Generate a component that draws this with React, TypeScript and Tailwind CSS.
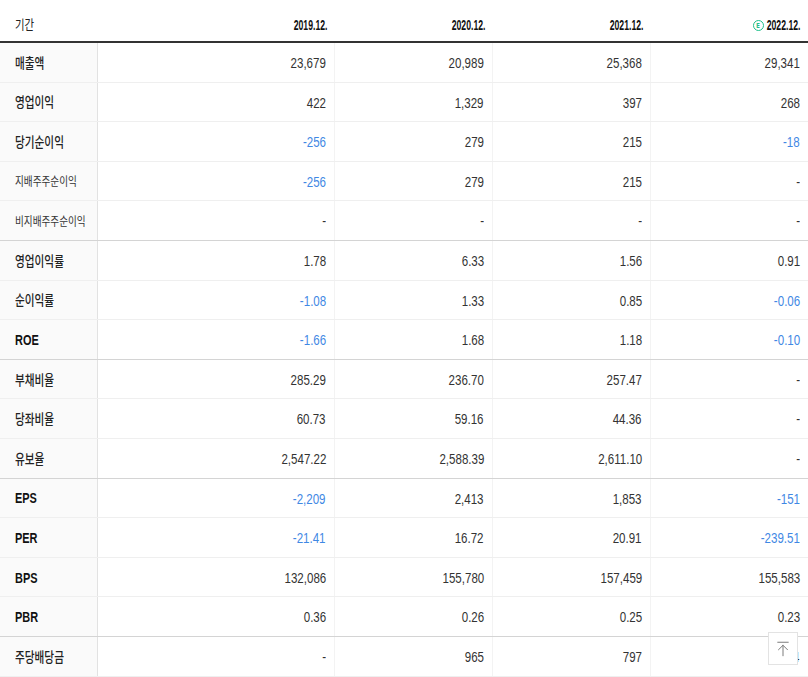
import { ArrowUpToLine } from "lucide-react";

type Row = { label: string; values: string[]; small?: boolean; latin?: boolean; groupEnd?: boolean };

const periods = ["2019.12.", "2020.12.", "2021.12.", "2022.12."];

const rows: Row[] = [
  { label: "매출액", values: ["23,679", "20,989", "25,368", "29,341"] },
  { label: "영업이익", values: ["422", "1,329", "397", "268"] },
  { label: "당기순이익", values: ["-256", "279", "215", "-18"] },
  { label: "지배주주순이익", values: ["-256", "279", "215", "-"], small: true },
  { label: "비지배주주순이익", values: ["-", "-", "-", "-"], small: true, groupEnd: true },
  { label: "영업이익률", values: ["1.78", "6.33", "1.56", "0.91"] },
  { label: "순이익률", values: ["-1.08", "1.33", "0.85", "-0.06"] },
  { label: "ROE", values: ["-1.66", "1.68", "1.18", "-0.10"], latin: true, groupEnd: true },
  { label: "부채비율", values: ["285.29", "236.70", "257.47", "-"] },
  { label: "당좌비율", values: ["60.73", "59.16", "44.36", "-"] },
  { label: "유보율", values: ["2,547.22", "2,588.39", "2,611.10", "-"], groupEnd: true },
  { label: "EPS", values: ["-2,209", "2,413", "1,853", "-151"], latin: true },
  { label: "PER", values: ["-21.41", "16.72", "20.91", "-239.51"], latin: true },
  { label: "BPS", values: ["132,086", "155,780", "157,459", "155,583"], latin: true },
  { label: "PBR", values: ["0.36", "0.26", "0.25", "0.23"], latin: true, groupEnd: true },
  { label: "주당배당금", values: ["-", "965", "797", "1,004"] },
];

const numFont = "font-['Liberation_Sans',Arial,sans-serif]";
const krFont = "font-['Liberation_Sans','Noto_Sans_CJK_KR',sans-serif]";

function EstimateMark() {
  return (
    <span className="inline-flex h-[11px] w-[11px] shrink-0 items-center justify-center rounded-full border border-[#1fbf8a] text-[7px] leading-none font-bold text-[#1fbf8a]">
      E
    </span>
  );
}

export default function App() {
  return (
    <div className="relative w-[808px] h-[677px] overflow-hidden bg-white text-[#222]">
      {/* Header */}
      <div className="grid grid-cols-[98px_237px_158px_158px_157px] h-[43px] border-b-2 border-[#333]">
        <div className={`${krFont} flex items-center pl-[15px] pt-[9px]`}>
          <span className="inline-block origin-left scale-x-[0.8] text-[13px] text-[#222]">기간</span>
        </div>
        {periods.map((p, i) => (
          <div key={p} className="flex items-center justify-end pr-[8px] pt-[9px]">
            {i === 3 && <EstimateMark />}
            <span
              className={`${numFont} inline-block origin-right scale-x-[0.62] text-[14px] font-bold text-[#111] ${
                i === 3 ? "-ml-[18px]" : ""
              }`}
            >
              {p}
            </span>
          </div>
        ))}
      </div>

      {/* Body */}
      {rows.map((row) => (
        <div
          key={row.label}
          className={`grid grid-cols-[98px_237px_158px_158px_157px] h-[39.6px] border-b ${
            row.groupEnd ? "border-[#d4d4d4]" : "border-[#efefef]"
          }`}
        >
          <div className={`flex items-center pl-[15px] pt-[2px] bg-[#fafafa] border-r border-[#e2e2e2] ${krFont}`}>
            <span
              className={`inline-block origin-left whitespace-nowrap ${
                row.latin
                  ? "scale-x-[0.78] text-[14px] font-bold text-[#111]"
                  : row.small
                  ? "scale-x-[0.8] text-[12px] text-[#333]"
                  : "scale-x-[0.76] text-[14px] font-medium text-[#222]"
              }`}
            >
              {row.label}
            </span>
          </div>
          {row.values.map((v, i) => (
            <div
              key={i}
              className={`flex items-center justify-end pr-[8px] pt-[2px] ${i < 3 ? "border-r border-[#f3f3f3]" : ""}`}
            >
              <span
                className={`${numFont} inline-block origin-right scale-x-[0.77] text-[15px] ${
                  v.startsWith("-") && v !== "-" ? "text-[#3f88e4]" : "text-[#333]"
                }`}
              >
                {v}
              </span>
            </div>
          ))}
        </div>
      ))}

      {/* Scroll to top */}
      <button className="absolute left-[768px] top-[632px] flex h-[33px] w-[30px] items-center justify-center border border-[#e3e3e3] bg-white text-[#777]">
        <ArrowUpToLine className="h-[18px] w-[18px]" strokeWidth={1.3} />
      </button>
    </div>
  );
}
